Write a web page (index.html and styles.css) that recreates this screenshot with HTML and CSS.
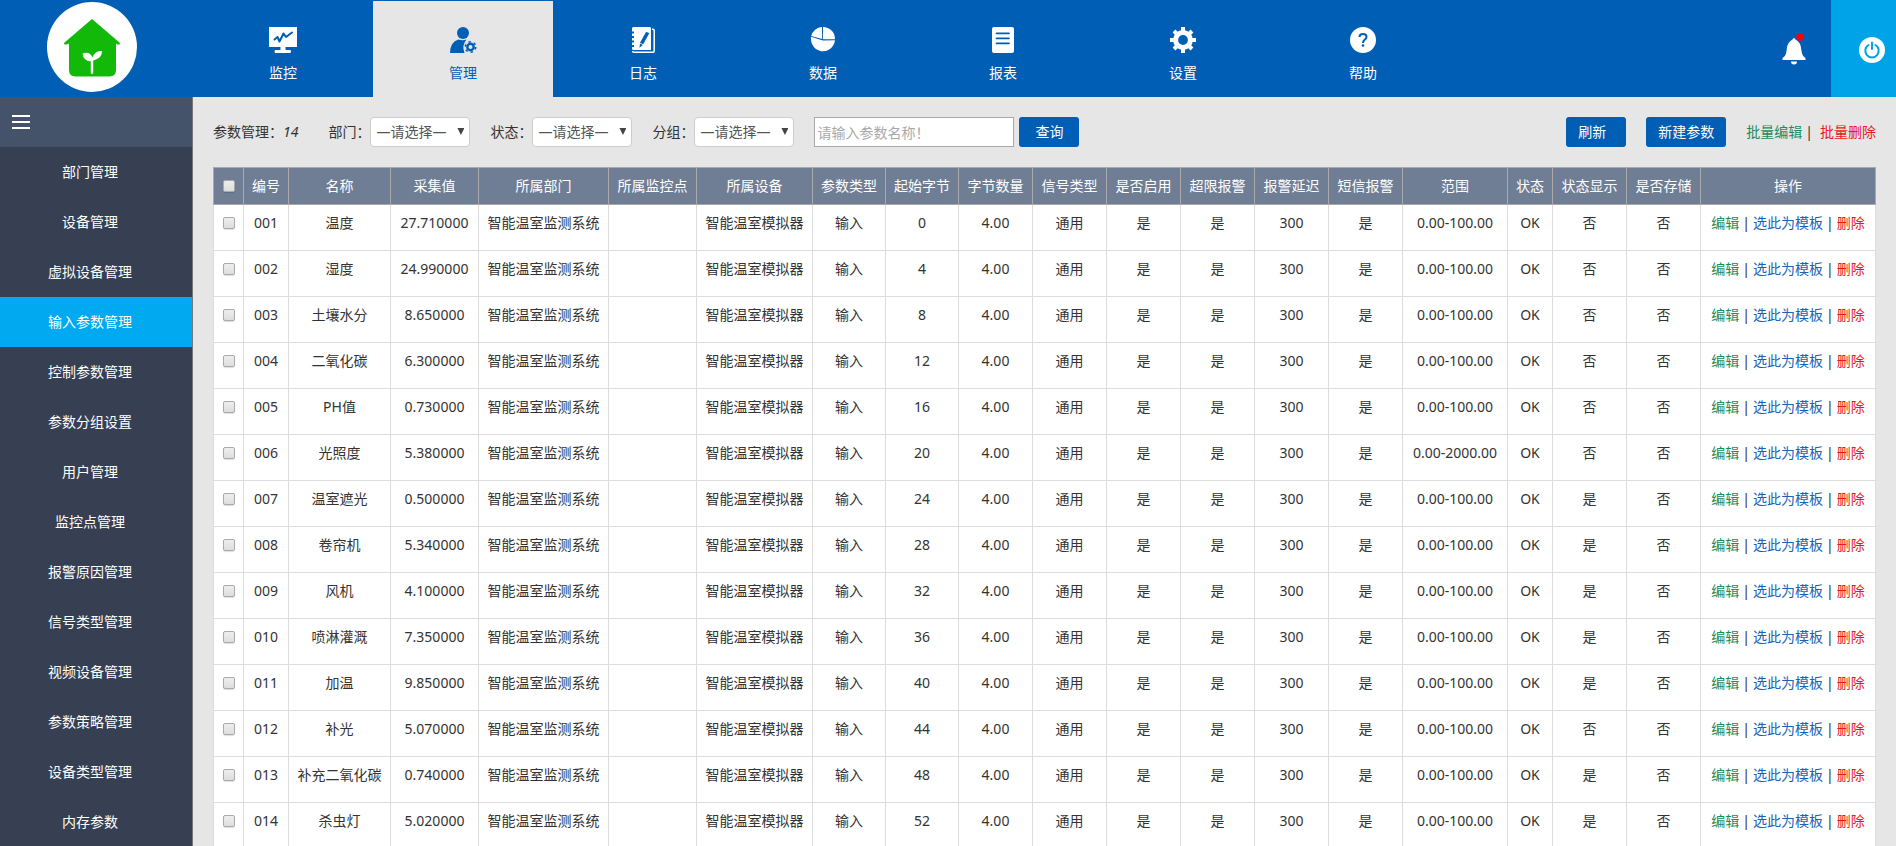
FILE: index.html
```html
<!DOCTYPE html>
<html lang="zh-CN">
<head>
<meta charset="utf-8">
<title>输入参数管理</title>
<link rel="stylesheet" href="styles.css">
</head>
<body>
<header class="topbar">
  <a class="logo" href="#" aria-label="首页">
    <svg viewBox="0 0 90 90" width="90" height="90">
      <circle cx="45" cy="45" r="45" fill="#fff"/>
      <path fill="#13b908" d="M45 17 72.500 40.500Q74 43 70.500 42.500L69 41.500V68Q69 74.500 62.500 74.500H28.500Q22 74.500 22 68V41.500L19.500 42.500Q16 43 17.500 40.500Z"/>
      <path fill="#fff" d="M43.800 71V59.500Q36 58.500 35.500 51.500Q43 49 45.500 55.500Q48 48 55 49Q55.500 56 46.200 58.500V71Q45 73 43.800 71Z"/>
    </svg>
  </a>
  <nav class="nav">
    <a class="nav-item" href="#">
      <svg viewBox="0 0 28 26" width="28" height="26"><path fill="currentColor" d="M0 0H28V20H16.500V23H21.500Q22.500 24.500 21.500 26H6Q5 24.500 6 23H11.500V20H0Z"/><path fill="none" stroke="#005eb5" stroke-width="2" stroke-linecap="round" stroke-linejoin="round" d="M5.500 12.500 8.500 10 10.500 14.500 14.500 6.500 17 10 23 5.500"/></svg>
      <span>监控</span>
    </a>
    <a class="nav-item is-active" href="#">
      <svg viewBox="0 0 28 26" width="28" height="26"><circle cx="14" cy="6" r="6" fill="currentColor"/><path fill="currentColor" d="M1 26Q1 15 9.500 12.500Q14 14 17.500 12.500Q12.500 18 15.500 26Z"/><circle cx="21.500" cy="20" r="3.200" fill="none" stroke="currentColor" stroke-width="2.400"/><circle cx="21.500" cy="20" r="5.200" fill="none" stroke="currentColor" stroke-width="1.600" stroke-dasharray="2.400 3.046"/></svg>
      <span>管理</span>
    </a>
    <a class="nav-item" href="#">
      <svg viewBox="0 0 28 26" width="28" height="26"><path fill="currentColor" d="M4 0H21Q22 0 22 2V23H4Q3 23 3 21V20H5V18H3V15.500H5V13.500H3V11H5V9H3V6.500H5V4.500H3V1Z"/><path fill="none" stroke="currentColor" stroke-width="1.500" d="M23 2.200H24Q25.200 2.200 25.200 3.500V24Q25.200 25.200 24 25.200H5Q3.500 25.200 3.500 24"/><path stroke="#005eb5" stroke-width="3.600" d="M18.700 5.500 12.600 16.500"/><path fill="#005eb5" d="M11 16.500 13.800 18 10.500 20.800Z"/></svg>
      <span>日志</span>
    </a>
    <a class="nav-item" href="#">
      <svg viewBox="0 0 28 26" width="28" height="26"><path fill="currentColor" d="M14 0A12 12 0 0 1 26 12.300L14 12.300ZM13 0 13.200 12 2.200 9A12 12 0 0 1 13 0ZM2 9.800 14 13.600 26 13.300A12 12.600 0 1 1 2 9.800Z"/></svg>
      <span>数据</span>
    </a>
    <a class="nav-item" href="#">
      <svg viewBox="0 0 28 26" width="28" height="26"><rect x="3" width="22" height="26" rx="2" fill="currentColor"/><path stroke="#005eb5" stroke-width="1.800" stroke-linecap="round" d="M7.500 6.300H20M7.500 11.300H20M7.500 16.300H20"/></svg>
      <span>报表</span>
    </a>
    <a class="nav-item" href="#">
      <svg viewBox="0 0 28 26" width="28" height="26"><circle cx="14" cy="13" r="7.400" fill="none" stroke="currentColor" stroke-width="5"/><path stroke="currentColor" stroke-width="4" d="M14 0V4M14 22V26M1 13H5M23 13H27M5 4 7.500 6.500M20.500 19.500 23 22M5 22 7.500 19.500M20.500 6.500 23 4"/></svg>
      <span>设置</span>
    </a>
    <a class="nav-item" href="#">
      <svg viewBox="0 0 28 26" width="28" height="26"><circle cx="14" cy="13" r="13" fill="currentColor"/><path fill="none" stroke="#005eb5" stroke-width="2" d="M10.500 10Q10.500 7 14 7Q17.500 7 17.500 10Q17.500 11.800 15.500 12.800Q14 13.800 14 16"/><circle cx="14" cy="18.500" r="1.300" fill="#005eb5"/></svg>
      <span>帮助</span>
    </a>
  </nav>
  <button class="bell" type="button" aria-label="通知">
    <svg viewBox="0 0 26 32" width="26" height="32"><path fill="#fff" d="M11.500 6.500Q13 3.500 14.500 6.500Q20 9 20.500 18Q21 23 24.500 25V27H1.500V25Q5 23 5.500 18Q6 9 11.500 6.500ZM10 28.500H16Q16 31.500 13 31.500Q10 31.500 10 28.500Z"/><circle cx="19" cy="4" r="3.700" fill="#f00"/></svg>
  </button>
  <button class="power" type="button" aria-label="退出">
    <svg viewBox="0 0 26 26" width="26" height="26"><circle cx="13" cy="13" r="13" fill="#fff"/><path fill="none" stroke="#00a2e8" stroke-width="2" stroke-linecap="round" d="M9.500 8A6.700 6.700 0 1 0 16.500 8M13 5.500V12"/></svg>
  </button>
</header>

<div class="layout">
  <aside class="sidebar">
    <div class="sidebar-head">
      <button class="menu-toggle" type="button" aria-label="菜单"><i></i><i></i><i></i></button>
    </div>
    <nav class="side-nav">
      <a href="#">部门管理</a>
      <a href="#">设备管理</a>
      <a href="#">虚拟设备管理</a>
      <a href="#" class="is-active">输入参数管理</a>
      <a href="#">控制参数管理</a>
      <a href="#">参数分组设置</a>
      <a href="#">用户管理</a>
      <a href="#">监控点管理</a>
      <a href="#">报警原因管理</a>
      <a href="#">信号类型管理</a>
      <a href="#">视频设备管理</a>
      <a href="#">参数策略管理</a>
      <a href="#">设备类型管理</a>
      <a href="#">内存参数</a>
    </nav>
  </aside>

  <main class="main">
    <form class="toolbar">
      <p class="count">参数管理<span class="colon">：</span><em>14</em></p>
      <div class="field">
        <label for="dept">部门<span class="colon">：</span></label>
        <span class="select"><select id="dept"><option>—请选择—</option></select></span>
      </div>
      <div class="field">
        <label for="state">状态<span class="colon">：</span></label>
        <span class="select"><select id="state"><option>—请选择—</option></select></span>
      </div>
      <div class="field">
        <label for="group">分组<span class="colon">：</span></label>
        <span class="select"><select id="group"><option>—请选择—</option></select></span>
      </div>
      <div class="search">
        <input class="search-input" type="text" aria-label="参数名称" placeholder="请输入参数名称！">
        <button class="btn" type="button">查询</button>
      </div>
      <div class="actions">
        <button class="btn btn-refresh" type="button">刷新</button>
        <button class="btn" type="button">新建参数</button>
        <div class="batch"><a class="edit" href="#">批量编辑</a><span>|</span><a class="delete" href="#">批量删除</a></div>
      </div>
    </form>

    <table class="grid">
      <colgroup>
        <col class="w-check"><col class="w-short"><col class="w-name"><col class="w-medium"><col class="w-dept">
        <col class="w-medium"><col class="w-device"><col class="w-byte"><col class="w-byte"><col class="w-std">
        <col class="w-std"><col class="w-std"><col class="w-std"><col class="w-std"><col class="w-std">
        <col class="w-range"><col class="w-short"><col class="w-std"><col class="w-std"><col>
      </colgroup>
      <thead>
        <tr>
          <th><input type="checkbox" aria-label="全选"></th>
          <th>编号</th><th>名称</th><th>采集值</th><th>所属部门</th><th>所属监控点</th><th>所属设备</th>
          <th>参数类型</th><th>起始字节</th><th>字节数量</th><th>信号类型</th><th>是否启用</th><th>超限报警</th>
          <th>报警延迟</th><th>短信报警</th><th>范围</th><th>状态</th><th>状态显示</th><th>是否存储</th><th>操作</th>
        </tr>
      </thead>
      <tbody id="rows"></tbody>
    </table>
  </main>
</div>
<script src="app.js"></script>
</body>
</html>
```
FILE: styles.css
```css
* {
  box-sizing: border-box;
}

body {
  margin: 0;
  height: 100vh;
  display: flex;
  flex-direction: column;
  background: #e6e6e6;
  color: #333;
  font: 14px/20px "Noto Sans", "Noto Sans CJK SC", sans-serif;
}

a {
  color: inherit;
  text-decoration: none;
}

button,
input,
select {
  font: inherit;
  color: inherit;
}

button {
  border: 0;
  padding: 0;
  background: none;
  cursor: pointer;
}

svg {
  display: block;
}

/* Top bar */
.topbar {
  flex: none;
  display: flex;
  height: 97px;
  background: #005eb5;
  color: #fff;
}

.logo {
  flex: none;
  width: 193px;
  padding: 2px 0 0 47px;
}

.nav {
  flex: 1;
  display: flex;
  padding-top: 1px;
}

.nav-item {
  width: 180px;
  display: flex;
  flex-direction: column;
  align-items: center;
  gap: 10px;
  padding-top: 26px;
}

.nav-item.is-active {
  background: #e6e6e6;
  color: #005eb5;
}

.bell {
  padding: 0 24px 0 0;
}

.power {
  width: 65px;
  padding: 3px 0 0 28px;
  background: #00a2e8;
}

/* Page body */
.layout {
  flex: 1;
  display: flex;
  min-height: 0;
}

.sidebar {
  flex: none;
  width: 193px;
  border-right: 1px solid #777;
  background: #364052;
  color: #fff;
  overflow: hidden;
}

.sidebar-head {
  display: flex;
  align-items: center;
  height: 50px;
  padding-left: 12px;
  background: #445369;
}

.menu-toggle {
  width: 18px;
  display: grid;
  gap: 4px;
}

.menu-toggle i {
  height: 2px;
  background: #fff;
}

.side-nav a {
  display: block;
  padding: 15px 12px 15px 0;
  text-align: center;
}

.side-nav .is-active {
  background: #00a9f0;
}

.main {
  flex: 1;
  min-width: 0;
  padding: 20px 20px 0;
  overflow: auto;
  scrollbar-width: none;
}

/* Toolbar */
.toolbar {
  display: flex;
  align-items: center;
  height: 30px;
  margin-bottom: 20px;
}

/* Full-width colon centred in its square */
.colon {
  font-family: "Noto Sans CJK TC", sans-serif;
  line-height: 1;
}

.count {
  margin: 0 30px 0 0;
}

.field {
  display: flex;
  align-items: center;
  margin-right: 20px;
}

.select {
  position: relative;
}

.select::after {
  content: "";
  position: absolute;
  top: 11px;
  right: 6px;
  width: 7px;
  height: 7px;
  background: #444;
  clip-path: polygon(0 0, 100% 0, 50% 100%);
  pointer-events: none;
}

.select select {
  display: block;
  appearance: none;
  width: 100px;
  height: 30px;
  padding: 0 5px;
  border: 1px solid #ccc;
  border-radius: 4px;
  background: #fff;
  color: #555;
}

.search {
  display: flex;
  gap: 5px;
}

.search-input {
  width: 200px;
  height: 30px;
  padding: 0 2px;
  border: 1px solid #a9a9a9;
  background: #fff;
}

.search-input::placeholder {
  color: #a9a9a9;
}

.btn {
  min-width: 60px;
  height: 30px;
  padding: 0 12px;
  border-radius: 3px;
  background: #005eb5;
  color: #fff;
}

.btn-refresh {
  text-align: left;
}

.actions {
  display: flex;
  align-items: center;
  gap: 20px;
  margin-left: auto;
}

.batch span {
  margin: 0 7px 0 3px;
}

.edit {
  color: #1c8d5c;
}

.copy {
  color: #1b62b3;
}

.delete {
  color: #ea1720;
}

/* Parameter table */
.grid {
  width: 100%;
  table-layout: fixed;
  border-collapse: collapse;
  background: #fff;
  text-align: center;
}

.grid th {
  height: 37px;
  padding: 0;
  border: 1px solid #a9a9a9;
  background: #6f7d95;
  color: #fff;
  font-weight: 400;
}

.grid td {
  height: 46px;
  padding: 8px 0 17px;
  border: 1px solid #ddd;
  white-space: nowrap;
}

.grid input {
  display: block;
  appearance: none;
  width: 12px;
  height: 12px;
  margin: 0 auto;
  border: 1px solid #aaa;
  border-radius: 2px;
  background: linear-gradient(#eee, #ddd);
  box-shadow: 0 1px 1px #0002;
}

.ops span {
  margin: 0 3px;
}

.w-check { width: 30px; }
.w-short { width: 45px; }
.w-name { width: 102px; }
.w-medium { width: 88px; }
.w-dept { width: 130px; }
.w-device { width: 116px; }
.w-byte { width: 73px; }
.w-std { width: 74px; }
.w-range { width: 105px; }
```
FILE: app.js
```js
// name, value, start byte, range upper limit, status shown
const params = [
  ["温度", "27.710000", 0, "100.00", "否"],
  ["湿度", "24.990000", 4, "100.00", "否"],
  ["土壤水分", "8.650000", 8, "100.00", "否"],
  ["二氧化碳", "6.300000", 12, "100.00", "否"],
  ["PH值", "0.730000", 16, "100.00", "否"],
  ["光照度", "5.380000", 20, "2000.00", "否"],
  ["温室遮光", "0.500000", 24, "100.00", "是"],
  ["卷帘机", "5.340000", 28, "100.00", "是"],
  ["风机", "4.100000", 32, "100.00", "是"],
  ["喷淋灌溉", "7.350000", 36, "100.00", "是"],
  ["加温", "9.850000", 40, "100.00", "是"],
  ["补光", "5.070000", 44, "100.00", "否"],
  ["补充二氧化碳", "0.740000", 48, "100.00", "是"],
  ["杀虫灯", "5.020000", 52, "100.00", "是"],
];

document.getElementById("rows").innerHTML = params.map(([name, value, start, max, shown], i) => {
  const id = String(i + 1).padStart(3, "0");
  const cells = [
    id, name, value, "智能温室监测系统", "", "智能温室模拟器", "输入", start, "4.00", "通用",
    "是", "是", "300", "是", `0.00-${max}`, "OK", shown, "否",
  ];
  return `<tr><td><input type="checkbox" aria-label="选择 ${id}"></td>` +
    cells.map((c) => `<td>${c}</td>`).join("") +
    `<td class="ops"><a class="edit" href="#">编辑</a><span>|</span>` +
    `<a class="copy" href="#">选此为模板</a><span>|</span>` +
    `<a class="delete" href="#">删除</a></td></tr>`;
}).join("");
```
